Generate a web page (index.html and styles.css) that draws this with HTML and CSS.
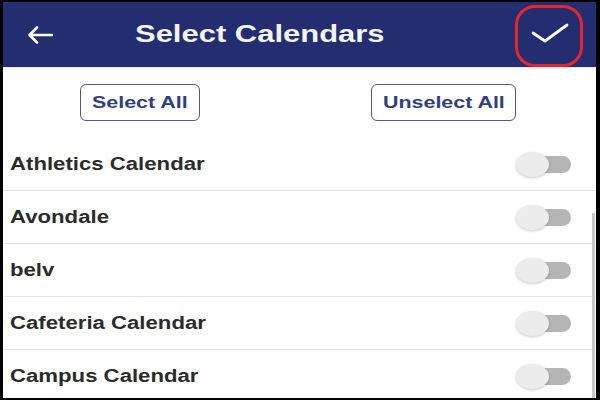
FILE: index.html
```html
<!DOCTYPE html>
<html>
<head>
<meta charset="utf-8">
<link rel="stylesheet" href="styles.css">
</head>
<body>
<div class="screen">
  <header class="appbar">
    <svg class="back" width="26" height="18" viewBox="0 0 26 18">
      <path d="M25 9H3M10 1.5L2.5 9L10 16.5" fill="none" stroke="#fff" stroke-width="2.6" stroke-linecap="round" stroke-linejoin="round"/>
    </svg>
    <h1 class="title"><span class="wide">Select Calendars</span></h1>
    <div class="done">
      <svg width="38" height="20" viewBox="0 0 38 20">
        <path d="M2 10L14 18L36 2" fill="none" stroke="#fff" stroke-width="2.8" stroke-linecap="round" stroke-linejoin="round"/>
      </svg>
    </div>
  </header>
  <div class="actions">
    <button class="btn btn-select"><span class="wide">Select All</span></button>
    <button class="btn btn-unselect"><span class="wide">Unselect All</span></button>
  </div>
  <ul class="list">
    <li class="row"><span class="label wide">Athletics Calendar</span><span class="toggle"><span class="thumb"></span></span></li>
    <li class="row"><span class="label wide">Avondale</span><span class="toggle"><span class="thumb"></span></span></li>
    <li class="row"><span class="label wide">belv</span><span class="toggle"><span class="thumb"></span></span></li>
    <li class="row"><span class="label wide">Cafeteria Calendar</span><span class="toggle"><span class="thumb"></span></span></li>
    <li class="row"><span class="label wide">Campus Calendar</span><span class="toggle"><span class="thumb"></span></span></li>
  </ul>
  <div class="scrollbar"></div>
</div>
</body>
</html>
```

FILE: styles.css
```css
html, body {
  margin: 0;
  padding: 0;
  background: #000;
}
body {
  width: 600px;
  height: 400px;
  overflow: hidden;
  font-family: "Liberation Sans", Arial, sans-serif;
}
.screen {
  position: relative;
  margin: 2px 4px 0 3px;
  width: 593px;
  height: 396px;
  background: #fff;
  overflow: hidden;
}
.wide {
  display: inline-block;
  transform: scaleX(1.26);
  transform-origin: left center;
}
.appbar {
  height: 65px;
  background: #232d6f;
  display: flex;
  align-items: center;
  box-shadow: 0 1px 2px rgba(0,0,0,0.12);
  position: relative;
}
.back {
  margin-left: 24px;
  flex: none;
}
.title {
  margin: 0 0 0 82px;
  font-size: 24px;
  font-weight: 700;
  color: #f4f5fa;
  line-height: 1;
  flex: none;
  padding-bottom: 2px;
}
.title .wide {
  transform: scaleX(1.29);
}
.done {
  align-self: flex-start;
  margin: 3px 13px 0 auto;
  width: 68px;
  height: 62px;
  border: 3px solid #e3262f;
  border-radius: 20px;
  display: flex;
  align-items: center;
  justify-content: center;
  flex: none;
  box-sizing: border-box;
  padding: 0 0 6px 2px;
}
.actions {
  display: flex;
  justify-content: space-between;
  padding: 17px 80px 0 77px;
  height: 55px;
  box-sizing: border-box;
}
.btn {
  height: 37px;
  border: 1.5px solid #525893;
  border-radius: 6px;
  background: #fff;
  color: #333d82;
  font-family: "Liberation Sans", Arial, sans-serif;
  font-weight: 700;
  font-size: 17px;
  padding: 0;
  text-align: left;
}
.btn-select {
  width: 120px;
  padding-left: 11px;
}
.btn-unselect {
  width: 145px;
  padding-left: 11px;
}
.list {
  list-style: none;
  margin: 16px 0 0;
  padding: 0;
}
.row {
  height: 52px;
  border-bottom: 1.5px solid #e6e6e6;
  display: flex;
  align-items: center;
  padding: 0 25px 0 7px;
}
.label {
  font-size: 17.6px;
  font-weight: 700;
  color: #2b2b2b;
}
.toggle {
  margin-left: auto;
  position: relative;
  width: 38px;
  height: 17px;
  border-radius: 9px;
  background: #b5b5b5;
}
.thumb {
  position: absolute;
  left: -17px;
  top: -4px;
  width: 33px;
  height: 25px;
  border-radius: 50%;
  background: #ececec;
  box-shadow: 0 1px 3px rgba(0,0,0,0.22);
}
.scrollbar {
  position: absolute;
  right: 1px;
  top: 211px;
  width: 3px;
  bottom: 0;
  background: #c9c9c9;
}
```
